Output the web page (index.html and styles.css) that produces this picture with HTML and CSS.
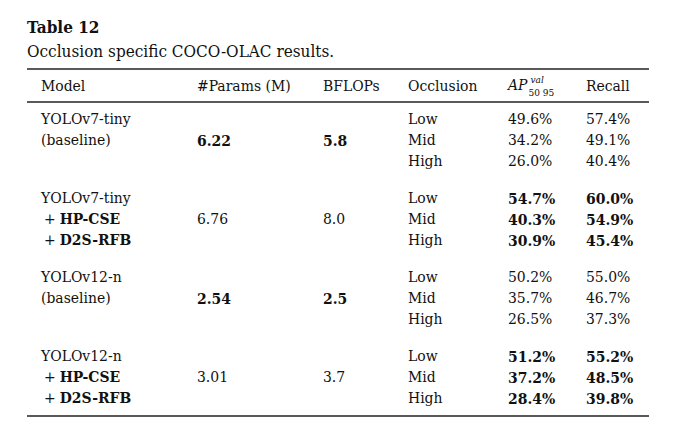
FILE: index.html
```html
<!DOCTYPE html>
<html>
<head>
<meta charset="utf-8">
<link rel="stylesheet" href="styles.css">
</head>
<body>
<div class="wrap">
  <div class="title">Table 12</div>
  <div class="caption">Occlusion specific COCO-OLAC results.</div>
  <table class="tbl">
    <colgroup>
      <col class="c1"><col class="c2"><col class="c3"><col class="c4"><col class="c5"><col class="c6">
    </colgroup>
    <thead>
      <tr>
        <th>Model</th><th>#Params (M)</th><th>BFLOPs</th><th>Occlusion</th>
        <th><span class="ap"><i>AP</i><span class="scripts"><span class="sup"><i>val</i></span><span class="sub">50 95</span></span></span></th>
        <th>Recall</th>
      </tr>
    </thead>
    <tbody>
      <tr class="first"><td>YOLOv7-tiny</td><td></td><td></td><td>Low</td><td>49.6%</td><td>57.4%</td></tr>
      <tr><td>(baseline)</td><td class="b">6.22</td><td class="b">5.8</td><td>Mid</td><td>34.2%</td><td>49.1%</td></tr>
      <tr><td></td><td></td><td></td><td>High</td><td>26.0%</td><td>40.4%</td></tr>

      <tr class="gap"><td>YOLOv7-tiny</td><td></td><td></td><td>Low</td><td class="b">54.7%</td><td class="b">60.0%</td></tr>
      <tr><td><span class="plus">+</span><b>HP-CSE</b></td><td>6.76</td><td>8.0</td><td>Mid</td><td class="b">40.3%</td><td class="b">54.9%</td></tr>
      <tr><td><span class="plus">+</span><b>D2S-RFB</b></td><td></td><td></td><td>High</td><td class="b">30.9%</td><td class="b">45.4%</td></tr>

      <tr class="gap"><td>YOLOv12-n</td><td></td><td></td><td>Low</td><td>50.2%</td><td>55.0%</td></tr>
      <tr><td>(baseline)</td><td class="b">2.54</td><td class="b">2.5</td><td>Mid</td><td>35.7%</td><td>46.7%</td></tr>
      <tr><td></td><td></td><td></td><td>High</td><td>26.5%</td><td>37.3%</td></tr>

      <tr class="gap"><td>YOLOv12-n</td><td></td><td></td><td>Low</td><td class="b">51.2%</td><td class="b">55.2%</td></tr>
      <tr><td><span class="plus">+</span><b>HP-CSE</b></td><td>3.01</td><td>3.7</td><td>Mid</td><td class="b">37.2%</td><td class="b">48.5%</td></tr>
      <tr class="last"><td><span class="plus">+</span><b>D2S-RFB</b></td><td></td><td></td><td>High</td><td class="b">28.4%</td><td class="b">39.8%</td></tr>
    </tbody>
  </table>
</div>
</body>
</html>
```
FILE: styles.css
```css
html, body {
  margin: 0;
  padding: 0;
  background: #ffffff;
}
body {
  font-family: "DejaVu Serif Condensed", "DejaVu Serif", serif;
  font-stretch: condensed;
  color: #111111;
}
.wrap {
  padding: 15px 0 0 27px;
  width: 622px;
}
.title {
  font-weight: bold;
  font-size: 17px;
  line-height: 24px;
}
.caption {
  font-size: 17px;
  line-height: 24px;
  margin-bottom: 5px;
}
.tbl {
  width: 622px;
  table-layout: fixed;
  border-collapse: collapse;
  font-size: 15.5px;
}
.c1 { width: 170px; }
.c2 { width: 126px; }
.c3 { width: 85px; }
.c4 { width: 100px; }
.c5 { width: 78px; }
.c6 { width: 63px; }
.tbl th {
  font-weight: normal;
  text-align: left;
  height: 28px;
  padding: 2px 0 1px 0;
  border-top: 2px solid #5a5a5a;
  border-bottom: 2px solid #5a5a5a;
  vertical-align: middle;
}
.tbl th:first-child,
.tbl td:first-child {
  padding-left: 14px;
}
.tbl td {
  padding: 0;
  height: 21px;
  line-height: 21px;
  white-space: nowrap;
}
.tbl td b,
.tbl td .plus { line-height: 1; }
.tbl tr.first td { padding-top: 6px; }
.tbl tr.gap td { padding-top: 16px; }
.tbl tr.last td { padding-bottom: 6px; border-bottom: 2px solid #5a5a5a; }
.b { font-weight: bold; }
.plus { margin-left: 3px; margin-right: 4px; }
.ap { display: inline-flex; align-items: center; line-height: 1; }
.ap i { font-style: italic; }
.scripts { display: inline-flex; flex-direction: column; font-size: 10px; line-height: 11px; margin-left: 1px; }
.sup { position: relative; top: -1px; left: 2px; }
.sub { position: relative; top: 1px; }
```
